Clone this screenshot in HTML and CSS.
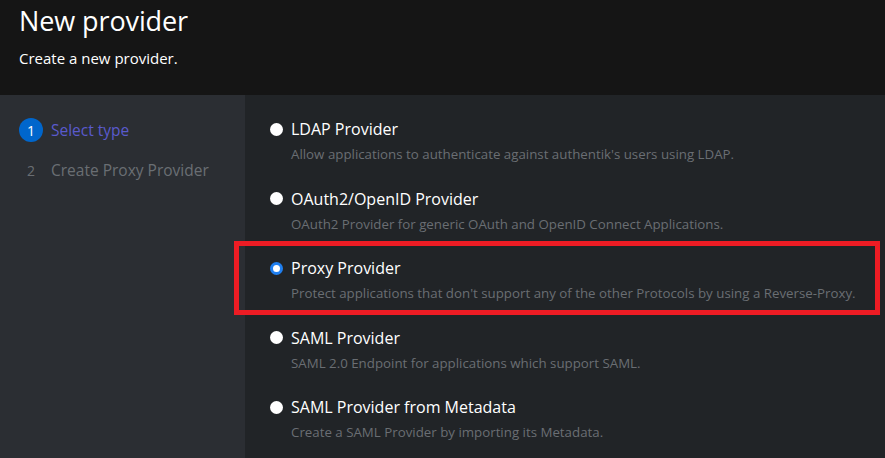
FILE: index.html
```html
<!DOCTYPE html>
<html>
<head>
<meta charset="utf-8">
<link rel="stylesheet" href="styles.css">
</head>
<body>
<header class="header">
  <h1 class="title">New provider</h1>
  <p class="subtitle">Create a new provider.</p>
</header>
<div class="wizard">
  <nav class="steps">
    <div class="step current"><span class="num">1</span><span class="label">Select type</span></div>
    <div class="step"><span class="num">2</span><span class="label">Create Proxy Provider</span></div>
  </nav>
  <main class="body">
    <div class="option">
      <div class="row"><span class="radio"></span><span class="name">LDAP Provider</span></div>
      <div class="desc">Allow applications to authenticate against authentik's users using LDAP.</div>
    </div>
    <div class="option">
      <div class="row"><span class="radio"></span><span class="name">OAuth2/OpenID Provider</span></div>
      <div class="desc">OAuth2 Provider for generic OAuth and OpenID Connect Applications.</div>
    </div>
    <div class="option highlighted">
      <div class="row"><span class="radio checked"></span><span class="name">Proxy Provider</span></div>
      <div class="desc">Protect applications that don't support any of the other Protocols by using a Reverse-Proxy.</div>
    </div>
    <div class="option">
      <div class="row"><span class="radio"></span><span class="name">SAML Provider</span></div>
      <div class="desc">SAML 2.0 Endpoint for applications which support SAML.</div>
    </div>
    <div class="option">
      <div class="row"><span class="radio"></span><span class="name">SAML Provider from Metadata</span></div>
      <div class="desc">Create a SAML Provider by importing its Metadata.</div>
    </div>
  </main>
</div>
</body>
</html>
```
FILE: styles.css
```css
html, body {
  margin: 0;
  padding: 0;
  height: 100%;
}
body {
  font-family: "Open Sans", "Liberation Sans", sans-serif;
  background: #212427;
  color: #ffffff;
  display: flex;
  flex-direction: column;
  overflow: hidden;
}
.header {
  background: #151515;
  height: 95px;
  box-sizing: border-box;
  padding: 2px 19px 0;
  flex: none;
}
.title {
  margin: 0;
  font-size: 27px;
  font-weight: 400;
  line-height: 38px;
  letter-spacing: -0.1px;
}
.subtitle {
  margin: 8px 0 0;
  font-size: 15px;
  line-height: 20px;
}
.wizard {
  flex: 1;
  display: flex;
}
.steps {
  width: 245px;
  background: #2b2e33;
  padding-top: 23px;
  box-sizing: border-box;
  flex: none;
}
.step {
  display: flex;
  align-items: center;
  height: 24px;
  margin-bottom: 16px;
  padding-left: 19px;
  font-size: 15.5px;
  color: #6a6e73;
}
.num {
  width: 24px;
  height: 24px;
  border-radius: 50%;
  display: flex;
  align-items: center;
  justify-content: center;
  font-size: 14px;
  margin-right: 8px;
}
.step.current .num {
  background: #0066cc;
  color: #fff;
}
.step.current .label {
  color: #5a5acc;
}
.body {
  flex: 1;
  padding-top: 24px;
}
.option {
  position: relative;
  margin-left: 25px;
  height: 69.5px;
}
.option .row {
  display: flex;
  align-items: center;
  height: 20px;
}
.option.highlighted::before {
  content: "";
  position: absolute;
  left: -36px;
  right: 5px;
  top: -17px;
  height: 74px;
  border: 5px solid #ed1c24;
  box-sizing: border-box;
}
.radio {
  width: 13px;
  height: 13px;
  border-radius: 50%;
  background: #fff;
  box-sizing: border-box;
  margin-right: 8px;
  flex: none;
}
.radio.checked {
  border: 3px solid #1f7ff0;
  background: #fff;
}
.name {
  font-size: 16px;
  color: #fff;
}
.desc {
  margin-top: 6px;
  margin-left: 21px;
  font-size: 13.3px;
  line-height: 18px;
  color: #6a6e73;
}
```
